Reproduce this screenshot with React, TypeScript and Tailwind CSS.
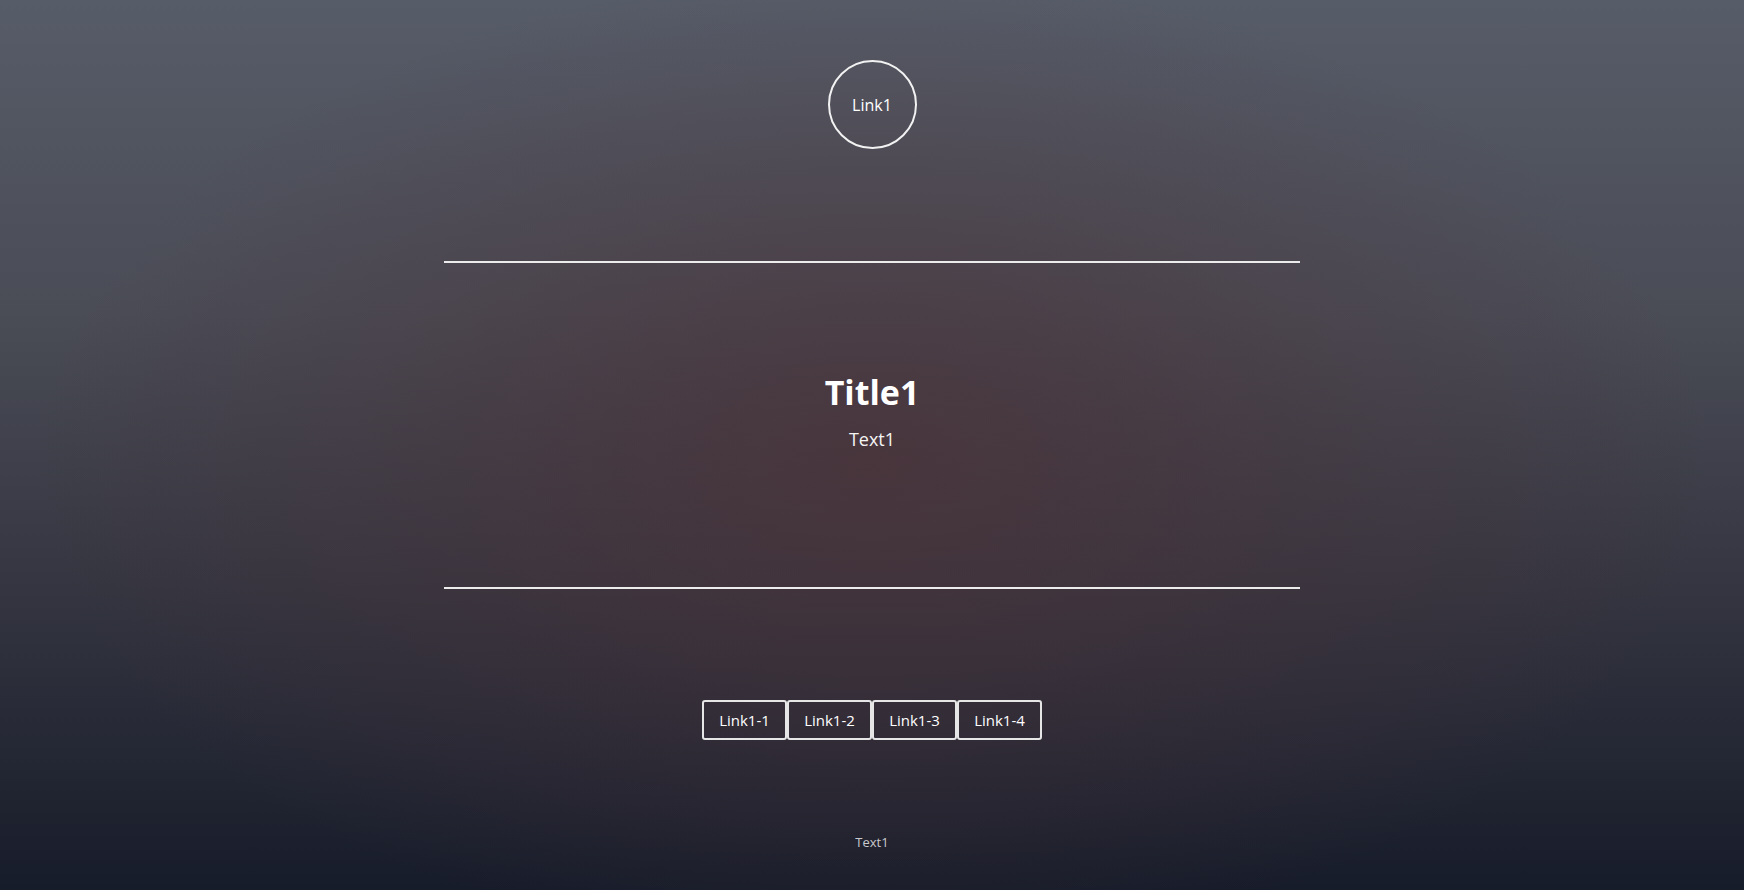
import React from 'react';

const links = ['Link1-1', 'Link1-2', 'Link1-3', 'Link1-4'];

const App = () => {
  return (
    <div
      className="h-screen overflow-hidden w-full flex flex-col items-center text-white bg-[radial-gradient(ellipse_48%_55%_at_50%_52%,rgba(76,50,56,0.75),rgba(76,50,56,0.3)_55%,rgba(76,50,56,0)_100%),linear-gradient(to_bottom,#565c68_0%,#4a4c56_35%,#353641_65%,#171c2a_100%)]"
      style={{ fontFamily: '"Open Sans", "Noto Sans", sans-serif' }}
    >
      <a
        href="#"
        className="mt-[60px] w-[89px] h-[89px] rounded-full border-2 border-[#f2f2f2] flex items-center justify-center text-base text-white"
      >
        Link1
      </a>

      <div className="mt-[112px] w-[856px] h-[2px] bg-[#ececec]" />

      <div className="w-[856px] flex flex-col items-center">
        <h1 className="mt-[109px] text-[34px] font-bold leading-10">Title1</h1>
        <p className="mt-[13px] text-lg leading-7 text-[#f4f4f4]">Text1</p>
      </div>

      <div className="mt-[134px] w-[856px] h-[2px] bg-[#ececec]" />

      <nav className="mt-[111px] flex">
        {links.map((l) => (
          <a
            key={l}
            href="#"
            className="w-[85px] h-[40px] flex items-center justify-center border-2 border-[#e6e6e6] rounded-[3px] text-[15px] text-white"
          >
            {l}
          </a>
        ))}
      </nav>

      <p className="mt-[92px] text-[13px] leading-5 text-[#c9c9cd]">Text1</p>
    </div>
  );
};

export default App;
